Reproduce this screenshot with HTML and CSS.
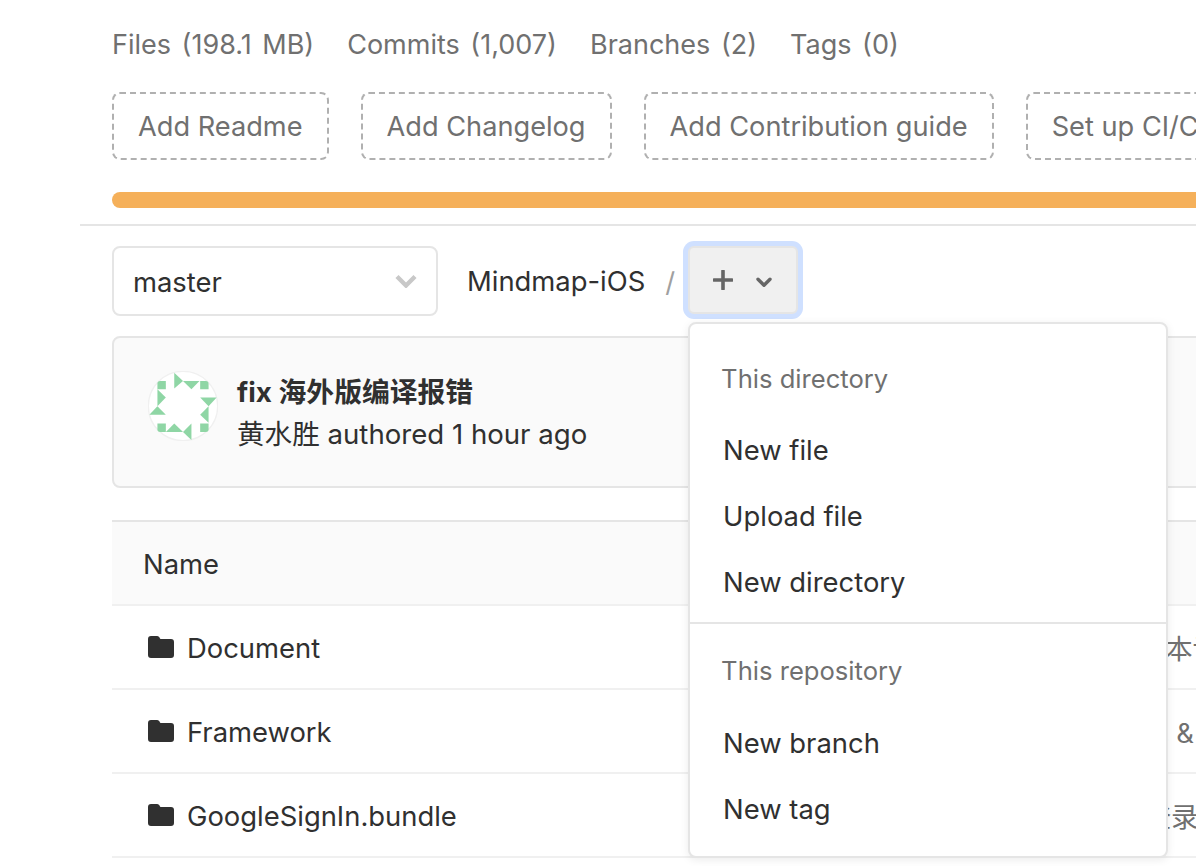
FILE: index.html
```html
<!doctype html>
<html lang="en">
<head>
  <meta charset="utf-8">
  <title>Mindmap-iOS</title>
  <link rel="stylesheet" href="styles.css">
</head>
<body>
  <div class="page">

    <section class="stats">
      <nav class="stat-links">
        <a>Files (198.1 MB)</a>
        <a>Commits (1,007)</a>
        <a>Branches (2)</a>
        <a>Tags (0)</a>
      </nav>
      <div class="stat-buttons">
        <a class="dashed">Add Readme</a>
        <a class="dashed">Add Changelog</a>
        <a class="dashed">Add Contribution guide</a>
        <a class="dashed">Set up CI/CD</a>
      </div>
      <div class="lang-bar"></div>
    </section>

    <section class="tree">
      <div class="tree-controls">
        <div class="branch-select">
          <span class="branch-name">master</span>
          <svg class="select-chevron" width="22" height="14" viewBox="0 0 22 14"><path d="M2 2.5l9 9 9-9" fill="none" stroke="#c8c8c8" stroke-width="4.4"/></svg>
        </div>
        <span class="crumb">Mindmap-iOS</span>
        <span class="slash">/</span>
        <div class="add-wrap">
          <button class="add-btn">
            <svg width="20" height="20" viewBox="0 0 20 20"><path d="M10 1v18M1 10h18" fill="none" stroke="#666" stroke-width="3.6" stroke-linecap="round"/></svg>
            <svg width="16" height="11" viewBox="0 0 16 11"><path d="M2 2.2l6 6 6-6" fill="none" stroke="#666" stroke-width="3.4" stroke-linecap="round" stroke-linejoin="round"/></svg>
          </button>
          <div class="menu">
            <div class="menu-head">This directory</div>
            <a class="menu-item">New file</a>
            <a class="menu-item">Upload file</a>
            <a class="menu-item">New directory</a>
            <div class="menu-sep"></div>
            <div class="menu-head">This repository</div>
            <a class="menu-item">New branch</a>
            <a class="menu-item">New tag</a>
          </div>
        </div>
      </div>

      <div class="commit">
        <svg class="avatar" width="70" height="70" viewBox="112 108 208 208">
          <circle cx="216" cy="212" r="103" fill="#fff" stroke="#f0f0f0" stroke-width="4"/>
          <g fill="#8fd6a5">
            <path d="M140 146a8 8 0 0 1 8-8h17v24h-25z"/>
            <path d="M267 138h17a8 8 0 0 1 8 8v16h-25z"/>
            <path d="M140 264h25v25h-17a8 8 0 0 1-8-8z"/>
            <path d="M267 264h25v17a8 8 0 0 1-8 8h-17z"/>
            <path d="M190 113l26 25-26 22z"/>
            <path d="M216 138h49l-24 24z"/>
            <path d="M267 187h49l-24 26z"/>
            <path d="M292 213v49l-25-24z"/>
            <path d="M241 264v49l-25-24z"/>
            <path d="M165 289h51l-26-25z"/>
            <path d="M116 238h49l-25-25z"/>
            <path d="M140 162l25 25-25 26z"/>
          </g>
        </svg>
        <div class="commit-text">
          <div class="commit-title">fix 海外版编译报错</div>
          <div class="commit-meta">黄水胜 authored 1 hour ago</div>
        </div>
      </div>

      <div class="files">
        <div class="files-head">Name</div>
        <div class="file-row">
          <div class="file-name">
            <svg width="26" height="22" viewBox="0 0 26 22"><path d="M3 0h6c1.500 0 2.500 1 3 2.500l.5.500H23a3 3 0 0 1 3 3v13a3 3 0 0 1-3 3H3a3 3 0 0 1-3-3V3a3 3 0 0 1 3-3z" fill="#303030"/></svg>
            <span class="file-label">Document</span>
          </div>
          <div class="file-msg">更新文档内容及版本记录</div>
        </div>
        <div class="file-row">
          <div class="file-name">
            <svg width="26" height="22" viewBox="0 0 26 22"><path d="M3 0h6c1.500 0 2.500 1 3 2.500l.5.500H23a3 3 0 0 1 3 3v13a3 3 0 0 1-3 3H3a3 3 0 0 1-3-3V3a3 3 0 0 1 3-3z" fill="#303030"/></svg>
            <span class="file-label">Framework</span>
          </div>
          <div class="file-msg">添加 Appsflyer 库 &amp; 更新</div>
        </div>
        <div class="file-row">
          <div class="file-name">
            <svg width="26" height="22" viewBox="0 0 26 22"><path d="M3 0h6c1.500 0 2.500 1 3 2.500l.5.500H23a3 3 0 0 1 3 3v13a3 3 0 0 1-3 3H3a3 3 0 0 1-3-3V3a3 3 0 0 1 3-3z" fill="#303030"/></svg>
            <span class="file-label">GoogleSignIn.bundle</span>
          </div>
          <div class="file-msg">新增 Google ID 登录</div>
        </div>
      </div>
    </section>

  </div>
</body>
</html>
```

FILE: styles.css
```css
html, body {
  height: 100%;
}

body {
  margin: 0;
  background-color: white;
  color: #303030;
  font-family: Inter, "Noto Sans CJK SC", sans-serif;
  font-size: 27.4px;
}

.page {
  width: 1196px;
  height: 866px;
  padding-left: 80px;
  box-sizing: border-box;
  overflow: hidden;
}

/* Stats block */

.stats {
  padding: 24px 0 16px 32px;
  border-bottom: 2px solid #e5e5e5;
}

.stat-links {
  display: flex;
  gap: 33px;
  height: 40px;
  line-height: 41px;
  color: #707070;
  font-size: 27px;
  word-spacing: 3px;
  white-space: nowrap;
}

.stat-buttons {
  display: flex;
  gap: 32px;
  margin-top: 28px;
  font-size: 27.2px;
  white-space: nowrap;
}

.dashed {
  flex: none;
  height: 68px;
  line-height: 65px;
  padding: 0 24px;
  box-sizing: border-box;
  border: 2px dashed #b0b0b0;
  border-radius: 8px;
  color: #707070;
}

.lang-bar {
  height: 16px;
  margin-top: 32px;
  width: 1200px;
  background-color: #f5b05a;
  border-radius: 8px;
}

/* Tree */

.tree {
  padding: 20px 0 0 32px;
}

.tree-controls {
  display: flex;
  align-items: flex-start;
  height: 70px;
}

.branch-select {
  width: 326px;
  height: 70px;
  box-sizing: border-box;
  border: 2px solid #e5e5e5;
  border-radius: 8px;
  padding: 0 19px;
  display: flex;
  align-items: center;
  justify-content: space-between;
  line-height: 70px;
}

.branch-name {
  margin-top: 2px;
}

.crumb {
  margin-left: 29px;
  line-height: 70px;
}

.slash {
  margin-left: 20px;
  line-height: 72px;
  color: #a0a0a0;
}

.add-wrap {
  position: relative;
  margin-left: 13px;
}

.add-btn {
  display: flex;
  align-items: center;
  gap: 23px;
  width: 110px;
  height: 68px;
  padding: 0 0 0 23px;
  box-sizing: border-box;
  background-color: #f0f0f0;
  border: 2px solid #e5e5e5;
  border-radius: 6px;
  box-shadow: 0 0 0 5px #cfe0ff;
}

.add-btn svg:last-child {
  margin-top: 5px;
}

.menu {
  position: absolute;
  left: 0;
  top: 76px;
  z-index: 2;
  width: 480px;
  height: 536px;
  box-sizing: border-box;
  padding-top: 16px;
  background-color: white;
  border: 2px solid #e5e5e5;
  border-radius: 8px;
  box-shadow: 0 2px 8px rgba(0, 0, 0, 0.08);
}

.menu-head {
  height: 77px;
  line-height: 48px;
  padding: 15px 31px 0;
  box-sizing: border-box;
  font-size: 25.6px;
  color: #707070;
}

.menu-sep + .menu-head {
  height: 78px;
}

.menu-item {
  display: block;
  height: 66px;
  line-height: 66px;
  padding: 0 33px;
}

.menu-sep {
  height: 2px;
  margin: 7px 0 8px;
  background-color: #e5e5e5;
}

/* Commit box */

.commit {
  display: flex;
  align-items: flex-start;
  gap: 19px;
  height: 152px;
  margin-top: 20px;
  width: 1200px;
  padding: 33px 0 0 34px;
  box-sizing: border-box;
  background-color: #fafafa;
  border: 2px solid #e5e5e5;
  border-radius: 8px;
}

.commit-text {
  margin-top: 1px;
}

.commit-title {
  font-weight: 700;
  font-size: 27.8px;
  line-height: 40px;
}

.commit-meta {
  font-size: 27.6px;
  line-height: 44px;
}

/* File table */

.files {
  margin-top: 32px;
  width: 1200px;
}

.files-head {
  height: 86px;
  line-height: 84px;
  padding-left: 31px;
  box-sizing: border-box;
  background-color: #fafafa;
  border-top: 2px solid #e5e5e5;
  border-bottom: 2px solid #f0f0f0;
}

.file-row {
  display: grid;
  grid-template-columns: 834px 1fr;
  align-items: center;
  height: 84px;
  border-bottom: 2px solid #f0f0f0;
  box-sizing: border-box;
  white-space: nowrap;
}

.file-name {
  display: flex;
  align-items: center;
  gap: 13px;
  padding-left: 36px;
}

.file-label {
  margin-top: 2px;
}

.file-msg {
  color: #707070;
  overflow: hidden;
}
```
